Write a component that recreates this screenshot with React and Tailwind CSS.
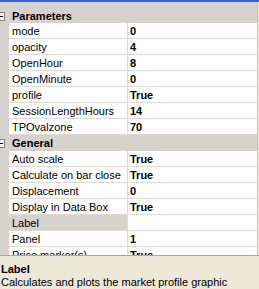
const groups = [
  {
    name: 'Parameters',
    rows: [
      ['mode', '0'],
      ['opacity', '4'],
      ['OpenHour', '8'],
      ['OpenMinute', '0'],
      ['profile', 'True'],
      ['SessionLengthHours', '14'],
      ['TPOvalzone', '70'],
    ],
  },
  {
    name: 'General',
    rows: [
      ['Auto scale', 'True'],
      ['Calculate on bar close', 'True'],
      ['Displacement', '0'],
      ['Display in Data Box', 'True'],
      ['Label', ''],
      ['Panel', '1'],
      ['Price marker(s)', 'True'],
    ],
  },
];

function Collapse() {
  return (
    <svg width="9" height="9" viewBox="0 0 9 9" className="ml-[-4px] mt-[2px] shrink-0">
      <rect x="0.5" y="0.5" width="8" height="8" fill="#fff" stroke="#7f7f7f" />
      <line x1="2" y1="4.5" x2="7" y2="4.5" stroke="#000" />
    </svg>
  );
}

function GroupHeader({ name, first }) {
  return (
    <div
      className={
        first
          ? 'flex h-[21px] items-start pt-[8px] bg-[#d6d3ce]'
          : 'flex h-[16px] items-start pt-[2px] bg-[#d6d3ce]'
      }
    >
      <div className="w-[9px] shrink-0 flex">
        <Collapse />
      </div>
      <span className="pl-[3px] font-bold leading-[13px]">{name}</span>
    </div>
  );
}

function Row({ label, value, selected }) {
  return (
    <div className="flex h-[16px]">
      <div className="w-[9px] shrink-0" />
      <div
        className={
          'w-[119px] shrink-0 h-[16px] border-b border-r border-[#dedbd5] pl-[3px] leading-[17px] whitespace-nowrap overflow-hidden ' +
          (selected ? 'bg-[#d6d3ce]' : 'bg-white')
        }
      >
        {label}
      </div>
      <div className="flex-1 h-[16px] bg-white border-b border-[#dedbd5] pl-[2px] leading-[17px] font-bold">
        {value}
      </div>
    </div>
  );
}

export default function App() {
  return (
    <div className="w-[259px] h-[289px] overflow-hidden flex flex-col bg-[#ece9d8] text-black text-[11px] font-['Liberation_Sans',Arial,sans-serif]">
      <div className="h-[2px] shrink-0 bg-[#3169d6]" />
      <div className="h-[253px] shrink-0 w-[258px] overflow-hidden bg-[#d6d3ce] border-r border-[#c9c6be]">
        {groups.map((g, gi) => (
          <div key={g.name}>
            <GroupHeader name={g.name} first={gi === 0} />
            {g.rows.map(([label, value]) => (
              <Row key={label} label={label} value={value} selected={label === 'Label'} />
            ))}
          </div>
        ))}
      </div>
      <div className="flex-1 border-t border-[#aca899] pt-[7px] pl-px leading-[13px]">
        <div className="font-bold">Label</div>
        <div className="whitespace-nowrap">Calculates and plots the market profile graphic</div>
      </div>
    </div>
  );
}
